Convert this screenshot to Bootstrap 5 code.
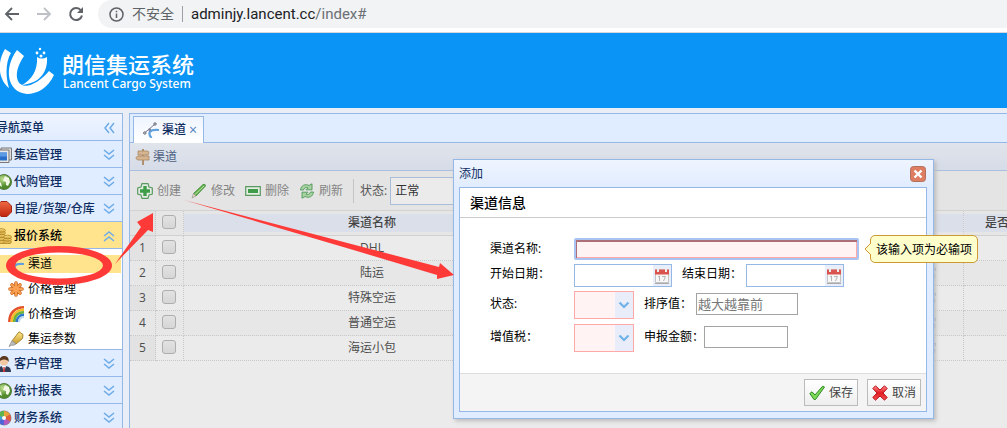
<!DOCTYPE html>
<html lang="zh-CN">
<head>
<meta charset="utf-8">
<meta name="viewport" content="width=device-width, initial-scale=1">
<title>朗信集运系统</title>
<link href="https://cdn.jsdelivr.net/npm/bootstrap@5.3.0/dist/css/bootstrap.min.css" rel="stylesheet">
<style>
  :root { --line: #95b8e7; --ink: #0e2d5f; }
  body { font: 12px/16px "Open Sans", "Noto Sans CJK SC", sans-serif; color: #000; background: #e8edf6; overflow: hidden; }
  svg { display: block; flex: none; }
  a { color: inherit; text-decoration: none; }
  .i16 { width: 16px; height: 16px; }
  /* browser bar */
  .chrome { height: 33px; background: #fff; border-bottom: 1px solid #d5d7da; gap: 16px; padding-left: 4px; }
  .chrome .omni { height: 28px; margin: 0 0 4px -2px; background: #f1f3f4; border-radius: 14px 0 0 14px; padding-left: 11px; gap: 8px; font-size: 14px; color: #5f6368; }
  .chrome svg { margin-bottom: 4px; }
  .omni svg { margin: 0; }
  .omni .bar { width: 1px; height: 16px; background: #9aa0a6; }
  .omni .addr { font: 15px/20px Roboto, sans-serif; color: #202124; }
  .omni .addr span { color: #6b6f74; }
  /* brand header */
  .brand { height: 75px; background: #0a95f6; color: #fff; }
  .brand h1 { font: 500 22px/26px "Noto Sans CJK SC", sans-serif; margin: 0; }
  .brand p { font: 500 12px/16px "Noto Sans", "Open Sans", sans-serif; margin: 0; padding-left: 1px; }
  .shell { padding-top: 5px; gap: 6px; height: calc(100vh - 108px); }
  /* side menu */
  .side { width: 132px; margin-left: -9px; border: 1px solid var(--line); border-bottom: 0; background: #fff; overflow: hidden; flex: none; }
  .side h2, .side .acc { height: 27px; margin: 0; padding: 2px 6px 0 4px; font-size: 12px; line-height: 16px; font-weight: 500; color: var(--ink); background: #e0ecff; border: 0; border-bottom: 1px solid var(--line); width: 100%; gap: 2px; text-align: left; }
  .side h2 { background: linear-gradient(#eff5ff, #e0ecff); }
  .side .acc.open { background: #ffe48d; color: #000; }
  .side .chev { margin-left: auto; width: 14px; height: 12px; fill: none; stroke: #6cabe8; stroke-width: 1.5; }
  .side ul { margin: 0; padding: 6px 0 0; border-bottom: 1px solid var(--line); }
  .side li { padding-bottom: 7px; margin-right: 1px; }
  .side li:last-child { padding-bottom: 1px; }
  .side li a { height: 18px; padding-left: 16px; gap: 4px; }
  .side li.on a { background: #ffe48d; }
  /* work area */
  .work { border: 1px solid var(--line); border-width: 1px 0 0 1px; background: #ebebeb; }
  .tabs { height: 29px; background: #e0ecff; border-bottom: 1px solid var(--line); padding: 2px 0 0 3px; }
  .tabs a { height: 27px; background: linear-gradient(#eff5ff, #fff); border: 1px solid var(--line); border-bottom: 0; padding: 0 6px 0 9px; gap: 3px; color: var(--ink); font-weight: 500; }
  .tabs .close-x { color: #4f7fbd; font-size: 14px; }
  .crumb { height: 28px; background: linear-gradient(#e0e4eb, #d6dce8); border-bottom: 1px solid #a9bfdd; padding-left: 5px; gap: 2px; color: #4c5f82; }
  .tools { height: 40px; background: #e4e4e4; border-bottom: 1px solid #d2d2d2; padding-left: 7px; gap: 10px; color: #858585; }
  .tools button { border: 0; background: none; padding: 0; gap: 4px; color: inherit; line-height: 16px; }
  .tools .sep { width: 1px; height: 24px; background: #c4c4c4; margin: 0 -4px 0 0; }
  .tools label { color: #555; margin-right: -7px; }
  .tools select { width: 150px; height: 28px; border: 1px solid #a9bcd8; background: #ebebeb; padding: 0 4px; color: #333; appearance: none; }
  .grid { table-layout: fixed; width: 960px; border-collapse: separate; border-spacing: 0; color: #4d4d4d; }
  .grid th, .grid td { height: 25px; padding: 0; text-align: center; font-weight: 400; border: dotted #c8c8c8; border-width: 0 1px 1px 0; vertical-align: middle; line-height: 16px; }
  .grid thead th { background: #e6e6e6; border-bottom: 1px solid #d0d0d0; color: #444; font-weight: 500; }
  .grid .cap { display: block; background: #dadfe9; line-height: 18px; height: 18px; }
  .grid .cap.lead-in { text-align: left; padding-left: 21px; }
  .grid .no { background: #e2e2e2; }
  .grid tbody tr:nth-child(even) td { background: #e7e7e7; }
  .grid input { appearance: none; display: block; margin: 0 auto 2px 6px; width: 14px; height: 14px; border: 1px solid #aeaeae; border-radius: 3px; background: linear-gradient(#e2e2e2, #d6d6d6); }
  .grid .blue { color: #8c9bb5; }
  /* window */
  .win { left: 453px; top: 159px; width: 481px; border: 1px solid var(--line); background: linear-gradient(#eff5ff, #e0ecff 28px); padding: 0 6px 6px 5px; box-shadow: 2px 2px 4px #bbb; }
  .win .cap-bar { height: 27px; color: var(--ink); }
  .win .cap-bar button { width: 16px; height: 16px; padding: 0; border: 0; background: none; margin-right: 1px; }
  .win .pane { border: 1px solid var(--line); background: #fff; }
  .win h3 { margin: 0; height: 30px; padding-left: 10px; font-size: 14px; line-height: 30px; font-weight: 500; border-bottom: 1px solid #ccc; }
  .win form { padding: 20px 0 21px 30px; }
  .line label { width: 84px; }
  .line label.next { width: auto; margin-left: 10px; }
  .line input { border: 1px solid #a3a3a3; height: 22px; padding: 0 1px; outline: 0; min-width: 0; background: #fff; }
  .line .need { width: 285px; border: 2px solid #a9c3f3; border-radius: 2px; background: #fff3f3; box-shadow: inset 1px 2px 0 #ad6f78, inset -1px -1px 0 #ffa8a8; }
  .date { width: 98px; height: 23px; border: 1px solid var(--line); }
  .line .date input { border: 0; width: 78px; height: 21px; }
  .date button { width: 18px; padding: 2px 1px; border: 0; background: #e9eefb; }
  .combo { width: 60px; height: 28px; border: 1px solid #ffa8a8; background: #fff3f3; }
  .combo select { appearance: none; border: 0; background: transparent; width: 40px; padding: 0; }
  .combo span { width: 18px; background: #e9edf9; }
  .dates label { line-height: 20px; }
  .picks { padding-bottom: 5px; }
  .picks label { line-height: 26px; }
  .picks input { margin-top: 2px; }
  .line .sort { width: 102px; font-size: 13px; }
  .line .sort::placeholder { color: #777; }
  .line .sum { width: 84px; }
  .foot { height: 38px; background: #f4f4f4; border-top: 1px solid #ddd; padding-right: 5px; gap: 9px; }
  .foot button { height: 27px; border: 1px solid #bbb; background: linear-gradient(#fff, #eee); padding: 0 3px 0 4px; gap: 4px; color: #444; line-height: 16px; width: 54px; }
  .tip { left: 864px; top: 235px; }
  .tip div { height: 28px; border: 1px solid #cc9933; border-radius: 5px; background: #ffffcc; padding: 0 5px; line-height: 27px; margin-left: -1px; white-space: nowrap; }
  .tip svg { z-index: 1; }
  .marks { left: 0; top: 0; pointer-events: none; z-index: 5; }
</style>
</head>
<body>
<svg width="0" height="0" class="position-absolute" aria-hidden="true">
  <defs>
    <linearGradient id="gy" x2="0" y2="1"><stop stop-color="#ffe98a"/><stop offset="1" stop-color="#c99a2e"/></linearGradient>
    <radialGradient id="gg" cx=".4" cy=".3"><stop stop-color="#bfe08f"/><stop offset="1" stop-color="#4f8a2c"/></radialGradient>
    <linearGradient id="gr" x2="0" y2="1"><stop stop-color="#ef6a42"/><stop offset="1" stop-color="#c02510"/></linearGradient>
    <linearGradient id="gx" x2="0" y2="1"><stop stop-color="#ff8a8a"/><stop offset=".5" stop-color="#e31b23"/><stop offset="1" stop-color="#f25555"/></linearGradient>
  </defs>
  <symbol id="down" viewBox="0 0 14 12"><path d="M2 1l5 4 5-4M2 6l5 4 5-4"/></symbol>
  <symbol id="up" viewBox="0 0 14 12"><path d="M2 6l5-4 5 4M2 11l5-4 5 4"/></symbol>
  <symbol id="left" viewBox="0 0 14 12"><path d="M7 1L3 6l4 5M12 1L8 6l4 5"/></symbol>
  <symbol id="film" viewBox="0 0 16 16"><path d="M5 1h10.500v12H5z" fill="#ddd" stroke="#777"/><path d="M1 3h12v12.500H1z" fill="#e8e8e8" stroke="#777"/><path d="M1 5.500h10v8H1z" fill="#2a6fc9"/><path d="M1 5.500h10v4H1z" fill="#5b9be6"/></symbol>
  <symbol id="globe" viewBox="0 0 16 16"><circle cx="8" cy="8" r="7.500" fill="url(#gg)" stroke="#557d3c"/><path d="M9 2l4 2 1 4-2 4-2-1v-3L7 7 8 4zM2 6l3 3 1 4-3-2z" fill="#f3f9e6"/></symbol>
  <symbol id="stop" viewBox="0 0 16 16"><path d="M5 .5h6L15.500 5v6L11 15.500H5L.5 11V5z" fill="url(#gr)" stroke="#a62512"/></symbol>
  <symbol id="coins" viewBox="0 0 16 16"><g fill="url(#gy)" stroke="#ad8126" stroke-width=".8"><ellipse cx="5" cy="14" rx="4.500" ry="1.800"/><ellipse cx="5" cy="11" rx="4.500" ry="1.800"/><ellipse cx="5" cy="8" rx="4.500" ry="1.800"/><ellipse cx="5" cy="5" rx="4.500" ry="1.800"/><ellipse cx="5" cy="2.500" rx="4.500" ry="1.800"/><ellipse cx="11.500" cy="14" rx="4" ry="1.800"/><ellipse cx="11.500" cy="11.500" rx="4" ry="1.800"/><ellipse cx="11.500" cy="9" rx="4" ry="1.800"/></g></symbol>
  <symbol id="curve" viewBox="0 0 16 16"><path d="M8.500 16C4.500 11 6 7 16 8" fill="none" stroke="#5fa2dd" stroke-width="2.200"/><path d="M1.500 11L12 2" stroke="#778" stroke-width="1"/><circle cx="1.800" cy="11" r="1.200" fill="#ddd" stroke="#667"/><circle cx="12" cy="2" r="1.200" fill="#ddd" stroke="#667"/><path d="M5.500 6.500h2.500v2.500H5.500z" fill="#889"/></symbol>
  <symbol id="star" viewBox="0 0 16 16"><g stroke="#c9641b" stroke-width="3.600" stroke-linecap="round"><path d="M8 2v12M2 8h12M4 4l8 8M12 4l-8 8"/></g><g stroke="#fba050" stroke-width="2.200" stroke-linecap="round"><path d="M8 2v12M2 8h12M4 4l8 8M12 4l-8 8"/></g></symbol>
  <symbol id="rainbow" viewBox="0 0 16 16"><g fill="none" stroke-width="2.600"><path d="M1.300 16C1.300 7 7 1.300 16 1.300" stroke="#e2522c"/><path d="M3.800 16C3.800 9 9 3.800 16 3.800" stroke="#f7bb28"/><path d="M6.300 16C6.300 10 10 6.300 16 6.300" stroke="#6cb33b"/><path d="M8.800 16C8.800 12 12 8.800 16 8.800" stroke="#2f77c9"/><path d="M11 16c0-3 2-5 5-5" stroke="#bcd9f2" stroke-width="2"/></g></symbol>
  <symbol id="marker" viewBox="0 0 16 16"><path d="M11 .8l4 2.700-.5 4L8 13l-4-3z" fill="url(#gy)" stroke="#a8862c"/><path d="M4 9.500L8 13l-2 1.200H3.500L1 15.500l1.500-3z" fill="#bbb" stroke="#888" stroke-width=".7"/></symbol>
  <symbol id="person" viewBox="0 0 16 16"><path d="M1 16c0-4 2-6 7-6s7 2 7 6z" fill="#333c55"/><path d="M6 10h4l-2 6z" fill="#fff"/><path d="M7.500 11h1.200l.5 5H7z" fill="#c33"/><circle cx="8" cy="5.500" r="4" fill="#f3c7a0"/><path d="M3.500 6C3 1 6 0 8.500 0s5 2 4 6C12 4 10 4 8 3.500 6 4 4 4 3.500 6z" fill="#5c3a22"/></symbol>
  <symbol id="wheel" viewBox="0 0 16 16"><circle cx="8" cy="8" r="7.500" fill="#888"/><path d="M8 8V1a7 7 0 0 1 6 3.500z" fill="#e8a23a"/><path d="M8 8l6-3.500a7 7 0 0 1 0 7z" fill="#e05a3c"/><path d="M8 8l6 3.500A7 7 0 0 1 8 15z" fill="#b45ac0"/><path d="M8 8v7a7 7 0 0 1-6-3.500z" fill="#4f66d6"/><path d="M8 8l-6 3.500a7 7 0 0 1 0-7z" fill="#3fa3d8"/><path d="M8 8L2 4.500A7 7 0 0 1 8 1z" fill="#5db54d"/><circle cx="8" cy="8" r="2" fill="#fff"/></symbol>
  <symbol id="sign" viewBox="0 0 16 16"><path d="M7 0h2v16H7z" fill="#b09070"/><path d="M3 2h10l1 2-1 2H3z" fill="#d6b48f" stroke="#a98862" stroke-width=".8"/><path d="M2.500 7H14v4H2.500L.8 9z" fill="#d6b48f" stroke="#a98862" stroke-width=".8"/></symbol>
  <symbol id="plus" viewBox="0 0 16 16"><path d="M5 .7h6l1 3.300 3.300 1v6L12 12l-1 3.300H5L4 12 .7 11V5L4 4z" fill="#e4ece4" stroke="#5a9a60" stroke-width="1.200"/><path d="M6.300 3h3.400v3.300H13v3.400H9.700V13H6.300V9.700H3V6.300h3.300z" fill="#3f9d4a"/></symbol>
  <symbol id="pencil" viewBox="0 0 16 16"><path d="M2.500 10.500L12 1.500q2.500-1 2.500 1.500L5 13z" fill="#62b04e" stroke="#3f8a38" stroke-width=".8"/><path d="M4 11.500L13 3" stroke="#b7e09f" stroke-width="1"/><path d="M2.500 10.500L5 13l-4 2z" fill="#e3d9c0" stroke="#888" stroke-width=".6"/></symbol>
  <symbol id="minus" viewBox="0 0 16 16"><path d="M.7 3.700h14.600v8.600H.7z" fill="#e4ece4" stroke="#5a9a60" stroke-width="1.200"/><path d="M3 6h10v4H3z" fill="#3f9d4a"/></symbol>
  <symbol id="reload" viewBox="0 0 16 16"><g fill="#a9d2a2" stroke="#4e9958" stroke-width=".9"><path d="M1.500 7C2 2.500 6 .5 10 2.500L13 .8v6H7l2-2C7 4 5 5 4.500 7z"/><path d="M14.500 9c-.5 4.500-4.500 6.500-8.500 4.500L3 15.200v-6h6l-2 2c2 .8 4 0 4.500-2.200z"/></g></symbol>
  <symbol id="cal" viewBox="0 0 16 16"><path d="M1.500 2h13v12.500h-13z" fill="#f7f7f7" stroke="#c5c5c5"/><path d="M1 1.500h14v5H1z" fill="#d9534f"/><path d="M4 0v4M12 0v4" stroke="#eee" stroke-width="2"/><path d="M4 9l1.500-1v5M8 8.500h3.500l-2 4.500" fill="none" stroke="#b5b5b5"/><path d="M1 15.500h14" stroke="#aaa"/></symbol>
  <symbol id="check" viewBox="0 0 16 16"><path d="M.8 8.500L3 6.800 6 10 13.500 1.300 15.500 2 6.500 14.500 5 14.500z" fill="#7bd857" stroke="#2f8a22"/></symbol>
  <symbol id="cross" viewBox="0 0 16 16"><path d="M3.500.8L8 5 12.500.8l2.700 2.700L11 8l4.200 4.500-2.700 2.700L8 11l-4.500 4.200L.8 12.500 5 8 .8 3.500z" fill="url(#gx)" stroke="#b5141b"/></symbol>
</svg>

<div class="chrome d-flex align-items-center">
  <svg width="16" height="16" viewBox="0 0 16 16" fill="none" stroke="#5f6368" stroke-width="1.800"><path d="M15 8H2M8 2L2 8l6 6"/></svg>
  <svg width="16" height="16" viewBox="0 0 16 16" fill="none" stroke="#bdc0c4" stroke-width="1.800"><path d="M1 8h13M8 2l6 6-6 6"/></svg>
  <svg width="16" height="16" viewBox="0 0 16 16"><path d="M13 4.500A6 6 0 1 0 14 9.500" fill="none" stroke="#5f6368" stroke-width="2"/><path d="M15 1v6H9z" fill="#5f6368"/></svg>
  <div class="omni d-flex align-items-center flex-grow-1">
    <svg width="15" height="15" viewBox="0 0 15 15" fill="none" stroke="#5f6368" stroke-width="1.500"><circle cx="7.500" cy="7.500" r="6.500"/><path d="M7.500 6.500V11M7.500 3.700v1.600"/></svg>
    <span>不安全</span><span class="bar"></span>
    <span class="addr">adminjy.lancent.cc<span>/index#</span></span>
  </div>
</div>

<header class="brand d-flex align-items-center">
  <svg width="62" height="75" viewBox="0 0 62 75" fill="#fff">
    <path d="M5 16l6 4C6 28 5 42 9 55-2 46-3 29 5 16z"/>
    <path d="M17 17l7 6c-6 9-9 18-6 25 5 10 20 3 31-10l5 4C48 55 37 61 27 61 6 59 4 34 17 17z"/>
    <path d="M37 24c3 2 6 2 10 0 1 14-6 26-25 28 9-5 16-14 15-28z"/>
    <circle cx="37" cy="20" r="1.400"/><circle cx="44" cy="20" r="1.400"/><circle cx="40" cy="16" r="1.200"/><circle cx="41" cy="23" r="1.500"/>
  </svg>
  <div><h1>朗信集运系统</h1><p>Lancent Cargo System</p></div>
</header>

<div class="shell d-flex">
  <nav class="side">
    <h2 class="d-flex align-items-center">导航菜单<svg class="chev"><use href="#left"/></svg></h2>
    <button class="acc d-flex align-items-center"><svg class="i16"><use href="#film"/></svg>集运管理<svg class="chev"><use href="#down"/></svg></button>
    <button class="acc d-flex align-items-center"><svg class="i16"><use href="#globe"/></svg>代购管理<svg class="chev"><use href="#down"/></svg></button>
    <button class="acc d-flex align-items-center"><svg class="i16"><use href="#stop"/></svg>自提/货架/仓库<svg class="chev"><use href="#down"/></svg></button>
    <button class="acc open d-flex align-items-center"><svg class="i16"><use href="#coins"/></svg>报价系统<svg class="chev"><use href="#up"/></svg></button>
    <ul class="list-unstyled">
      <li class="on"><a href="#" class="d-flex align-items-center"><svg class="i16"><use href="#curve"/></svg>渠道</a></li>
      <li><a href="#" class="d-flex align-items-center"><svg class="i16"><use href="#star"/></svg>价格管理</a></li>
      <li><a href="#" class="d-flex align-items-center"><svg class="i16"><use href="#rainbow"/></svg>价格查询</a></li>
      <li><a href="#" class="d-flex align-items-center"><svg class="i16"><use href="#marker"/></svg>集运参数</a></li>
    </ul>
    <button class="acc d-flex align-items-center"><svg class="i16"><use href="#person"/></svg>客户管理<svg class="chev"><use href="#down"/></svg></button>
    <button class="acc d-flex align-items-center"><svg class="i16"><use href="#globe"/></svg>统计报表<svg class="chev"><use href="#down"/></svg></button>
    <button class="acc d-flex align-items-center"><svg class="i16"><use href="#wheel"/></svg>财务系统<svg class="chev"><use href="#down"/></svg></button>
  </nav>

  <main class="work flex-grow-1 overflow-hidden">
    <div class="tabs d-flex"><a href="#" class="d-flex align-items-center"><svg class="i16"><use href="#curve"/></svg>渠道<span class="close-x">×</span></a></div>
    <div class="crumb d-flex align-items-center"><svg class="i16"><use href="#sign"/></svg>渠道</div>
    <div class="tools d-flex align-items-center">
      <button class="d-flex align-items-center"><svg class="i16"><use href="#plus"/></svg>创建</button>
      <button class="d-flex align-items-center"><svg class="i16"><use href="#pencil"/></svg>修改</button>
      <button class="d-flex align-items-center"><svg class="i16"><use href="#minus"/></svg>删除</button>
      <button class="d-flex align-items-center"><svg class="i16"><use href="#reload"/></svg>刷新</button>
      <span class="sep"></span>
      <label for="st">状态:</label>
      <select id="st"><option>正常</option></select>
    </div>
    <table class="grid">
      <colgroup><col style="width:26px"><col style="width:28px"><col style="width:377px"><col style="width:325px"><col style="width:78px"><col></colgroup>
      <thead><tr><th class="no"></th><th><input type="checkbox" aria-label="全选"></th><th><span class="cap">渠道名称</span></th><th><span class="cap"></span></th><th><span class="cap"></span></th><th><span class="cap lead-in">是否</span></th></tr></thead>
      <tbody>
        <tr><td class="no">1</td><td><input type="checkbox" aria-label="1"></td><td>DHL</td><td></td><td></td><td></td></tr>
        <tr><td class="no">2</td><td><input type="checkbox" aria-label="2"></td><td>陆运</td><td></td><td class="blue">正常</td><td></td></tr>
        <tr><td class="no">3</td><td><input type="checkbox" aria-label="3"></td><td>特殊空运</td><td></td><td class="blue">正常</td><td></td></tr>
        <tr><td class="no">4</td><td><input type="checkbox" aria-label="4"></td><td>普通空运</td><td></td><td class="blue">正常</td><td></td></tr>
        <tr><td class="no">5</td><td><input type="checkbox" aria-label="5"></td><td>海运小包</td><td></td><td class="blue">正常</td><td></td></tr>
      </tbody>
    </table>
  </main>
</div>

<section class="win position-absolute" role="dialog" aria-label="添加">
  <div class="cap-bar d-flex align-items-center justify-content-between">添加
    <button aria-label="关闭"><svg class="i16" viewBox="0 0 16 16"><rect x=".5" y=".5" width="15" height="15" rx="3" fill="#dd7d62" stroke="#b5705c"/><path d="M4.500 4.500l7 7M11.500 4.500l-7 7" stroke="#fff" stroke-width="2.400"/></svg></button>
  </div>
  <div class="pane">
    <h3>渠道信息</h3>
    <form>
      <div class="line d-flex align-items-center mb-1"><label for="nm">渠道名称:</label><input id="nm" class="need"></div>
      <div class="line dates d-flex align-items-start mb-1"><label for="d1">开始日期：</label>
        <div class="date d-flex"><input id="d1"><button type="button" aria-label="选择日期"><svg class="i16"><use href="#cal"/></svg></button></div>
        <label for="d2" class="next me-1">结束日期：</label>
        <div class="date d-flex"><input id="d2"><button type="button" aria-label="选择日期"><svg class="i16"><use href="#cal"/></svg></button></div>
      </div>
      <div class="line picks d-flex align-items-start"><label for="s1">状态:</label>
        <div class="combo d-flex"><select id="s1"><option></option></select><span class="d-flex align-items-center justify-content-center"><svg width="12" height="8" viewBox="0 0 12 8" fill="none" stroke="#6fb3e8" stroke-width="2.200"><path d="M1.500 1.500L6 6l4.500-4.500"/></svg></span></div>
        <label for="sv" class="next me-1">排序值：</label><input id="sv" class="sort" placeholder="越大越靠前">
      </div>
      <div class="line picks d-flex align-items-start pb-0"><label for="s2">增值税：</label>
        <div class="combo d-flex"><select id="s2"><option></option></select><span class="d-flex align-items-center justify-content-center"><svg width="12" height="8" viewBox="0 0 12 8" fill="none" stroke="#6fb3e8" stroke-width="2.200"><path d="M1.500 1.500L6 6l4.500-4.500"/></svg></span></div>
        <label for="am" class="next">申报金额：</label><input id="am" class="sum">
      </div>
    </form>
    <div class="foot d-flex align-items-center justify-content-end">
      <button class="d-flex align-items-center"><svg class="i16"><use href="#check"/></svg>保存</button>
      <button class="d-flex align-items-center"><svg class="i16"><use href="#cross"/></svg>取消</button>
    </div>
  </div>
</section>

<div class="tip position-absolute d-flex align-items-center" role="tooltip">
  <svg class="position-relative" width="7" height="14" viewBox="0 0 7 14"><path d="M7 1L1 7l6 6" fill="#ffffcc" stroke="#cc9933"/></svg><div>该输入项为必输项</div>
</div>

<svg class="marks position-absolute" width="460" height="300" fill="#fe3a38" aria-hidden="true">
  <path fill-rule="evenodd" d="M6 265.500a53 19.500 0 1 0 106 0a53 19.500 0 1 0-106 0zM15 265.500a44 13 0 1 1 88 0a44 13 0 1 1-88 0z"/>
  <path d="M115 264l26-37-4-5 16-9v19l-5-2z"/>
  <path d="M184 200l255 67 1-4 14 12-17 4v-4L350 249z"/>
</svg>
<script src="https://cdn.jsdelivr.net/npm/bootstrap@5.3.0/dist/js/bootstrap.bundle.min.js"></script>
</body>
</html>
